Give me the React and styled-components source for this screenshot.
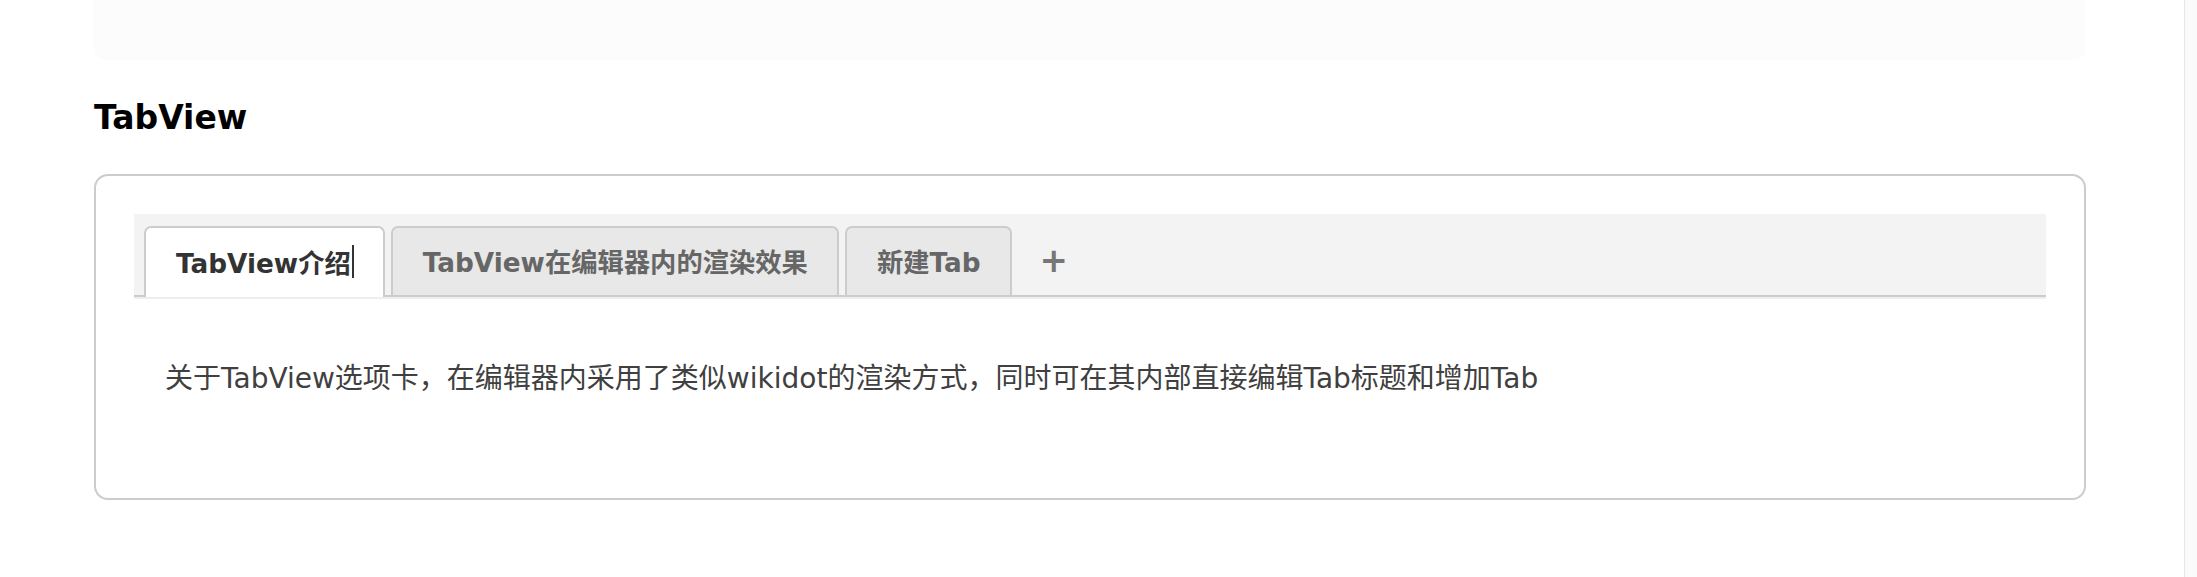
import React from "react";
import styled, { createGlobalStyle } from "styled-components";

const Global = createGlobalStyle`
  html, body { margin: 0; padding: 0; background: #fff; }
  body { font-family: "DejaVu Sans", "Noto Sans CJK SC", sans-serif; overflow: hidden; }
`;

const Page = styled.div`
  width: 2184px;
  height: 577px;
  padding: 0 98px 0 94px;
  box-sizing: border-box;
`;

const CodeTail = styled.div`
  height: 60px;
  background: #fcfcfc;
  border-radius: 0 0 12px 12px;
`;

const Heading = styled.h3`
  margin: 39px 0 0;
  font-size: 33px;
  line-height: 38px;
  font-weight: bold;
  color: #000;
`;

const Card = styled.div`
  margin-top: 37px;
  height: 326px;
  box-sizing: border-box;
  border: 2px solid #cccccc;
  border-radius: 14px;
  padding: 38px 38px 0;
`;

const TabBar = styled.div`
  display: flex;
  align-items: flex-end;
  gap: 6px;
  height: 83px;
  box-sizing: border-box;
  padding: 12px 10px 0;
  background: #f3f3f3;
  border-bottom: 2px solid #cccccc;
  box-shadow: 0 2px 0 #eeeeee;
`;

const Tab = styled.div`
  display: flex;
  align-items: center;
  height: 71px;
  box-sizing: border-box;
  margin-bottom: -2px;
  padding: 0 29px 2px 30px;
  border: 2px solid #cccccc;
  border-bottom: ${(p) => (p.$active ? "none" : "2px solid #cccccc")};
  border-radius: 7px 7px 0 0;
  background: ${(p) => (p.$active ? "#ffffff" : "#e8e8e8")};
  color: ${(p) => (p.$active ? "#333333" : "#666666")};
  font-size: 26.3px;
  font-weight: bold;
  white-space: nowrap;
`;

const Caret = styled.span`
  display: inline-block;
  width: 2px;
  height: 33px;
  margin-left: 1px;
  background: #333;
`;

const AddTab = styled.div`
  display: flex;
  align-items: center;
  height: 71px;
  padding: 0 22px;
  color: #777777;
  font-size: 34px;
  font-weight: bold;
`;

const Body = styled.div`
  padding: 63px 31px 0;
  font-size: 28px;
  line-height: 38px;
  color: #404040;
  white-space: nowrap;
`;

const ScrollTrack = styled.div`
  position: fixed;
  top: 0;
  right: 0;
  width: 12px;
  height: 100%;
  background: #fafafa;
  border-left: 1px solid #e6e6e6;
`;

export default function App() {
  return (
    <>
      <Global />
      <Page>
        <CodeTail />
        <Heading>TabView</Heading>
        <Card>
          <TabBar>
            <Tab $active>
              TabView介绍
              <Caret />
            </Tab>
            <Tab>TabView在编辑器内的渲染效果</Tab>
            <Tab>新建Tab</Tab>
            <AddTab>+</AddTab>
          </TabBar>
          <Body>
            关于TabView选项卡，在编辑器内采用了类似wikidot的渲染方式，同时可在其内部直接编辑Tab标题和增加Tab
          </Body>
        </Card>
      </Page>
      <ScrollTrack />
    </>
  );
}
